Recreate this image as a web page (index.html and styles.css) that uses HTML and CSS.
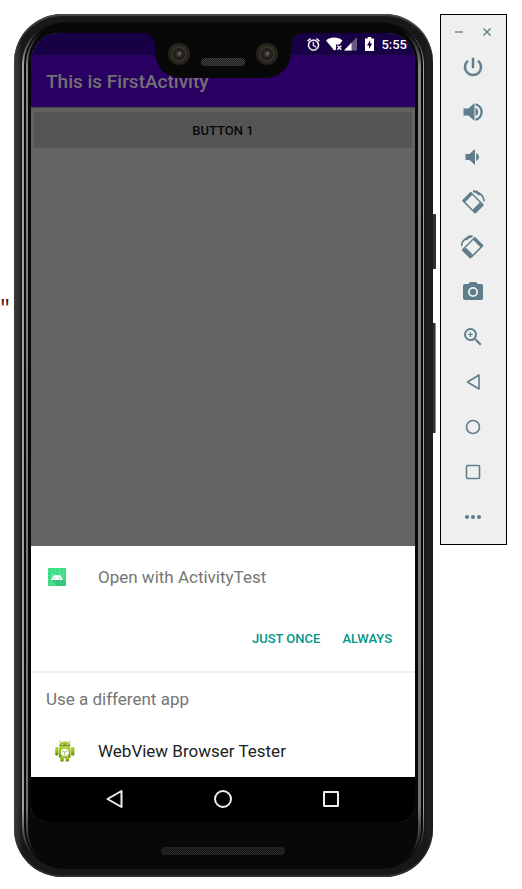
FILE: index.html
```html
<!DOCTYPE html>
<html lang="en">
<head>
<meta charset="utf-8">
<title>Android Emulator</title>
<link rel="stylesheet" href="styles.css">
</head>
<body>
<span class="code-edge">"</span>
<main class="phone">
  <i class="side-key power-key"></i>
  <i class="side-key volume-key"></i>
  <div class="rim">
    <div class="inner-rim">
      <div class="screen">
        <div class="status-bar">
          <svg class="alarm" width="15" height="15" viewBox="0 0 24 24"><path stroke="#fff" stroke-width=".5" d="M22 5.720l-4.600-3.860-1.290 1.530 4.600 3.860L22 5.720zM7.880 3.390L6.600 1.860 2 5.710l1.290 1.530 4.590-3.850zM12.500 8H11v6l4.750 2.850.75-1.230-4-2.370V8zM12 4a9 9 0 1 0 0 18 9 9 0 0 0 0-18zm0 16a7 7 0 1 1 0-14 7 7 0 0 1 0 14z"/></svg>
          <svg class="wifi" width="17" height="14" viewBox="0 0 17 14"><path d="M0 3.500C2.500 1.200 5 .5 8.200.5s5.800.7 8.300 3L13.500 7.500H10v5L8.200 13.500z"/><path d="M11.300 8.700l4 4m0-4l-4 4" fill="none" stroke="#fff" stroke-width="1.400"/></svg>
          <svg class="signal" width="13" height="14" viewBox="0 0 13 14"><path d="M13 0v13.500H0z" opacity=".35"/><path d="M7.500 5.700v7.800H0z"/></svg>
          <svg class="battery" width="9" height="14" viewBox="0 0 9 14"><path fill-rule="evenodd" d="M2.700 0h3.600v1.400H9V14H0V1.400h2.700zM5.200 3L2 8.400h2V12l3.200-5.400H5.200z"/></svg>
          <time>5:55</time>
        </div>
        <header class="app-bar"><h1>This is FirstActivity</h1></header>
        <section class="activity"><button type="button">BUTTON 1</button></section>
        <section class="sheet">
          <div class="row">
            <svg class="icon" width="38" height="20" viewBox="0 0 38 20"><rect x="2" y="1" width="18" height="18" rx="1" fill="#3ddc84"/><path d="M2 4.500h18M2 8.500h18M2 12.500h18M2 16.500h18M5.500 1v18M9.500 1v18M13.500 1v18M17.500 1v18" stroke="#70e7a6" stroke-width=".4"/><path d="M5.500 13l6 6H20v-3l-3.500-5z" fill="#2fb873" opacity=".65"/><path d="M5.300 13c.3-3 2.400-5.100 5.700-5.100s5.400 2.100 5.700 5.100z" fill="#fff"/><path d="M8 8.500L6.900 6.700M14 8.500l1.100-1.800" stroke="#fff" stroke-width=".7"/><circle cx="8.500" cy="11" r=".6" fill="#28895b"/><circle cx="13.500" cy="11" r=".6" fill="#28895b"/></svg>
            <h2>Open with ActivityTest</h2>
          </div>
          <div class="actions"><button type="button">JUST ONCE</button><button type="button">ALWAYS</button></div>
          <h2 class="other">Use a different app</h2>
          <a class="row app" href="#">
            <svg class="icon" width="38" height="24" viewBox="0 0 38 24"><defs><linearGradient id="robot" x2="0" y2="1"><stop stop-color="#b8d432"/><stop offset=".45" stop-color="#9cbf26"/><stop offset="1" stop-color="#5e850f"/></linearGradient></defs><path d="M14.500 4l-.9-2.500M23.100 4l.9-2.500" stroke="#a9c936"/><g fill="url(#robot)"><path d="M13.200 7.400c.1-3.200 2.200-5 5.600-5s5.500 1.800 5.600 5z"/><rect x="13" y="7.700" width="11.600" height="11.300" rx="1"/><rect x="9.200" y="8" width="3.300" height="8.500" rx="1"/><rect x="25.100" y="8" width="3.300" height="8.500" rx="1"/><rect x="14.300" y="17" width="3.500" height="5.500" rx="1"/><rect x="19.500" y="17" width="3.500" height="5.500" rx="1"/></g><circle cx="16.300" cy="5.300" r=".6" fill="#fff"/><circle cx="21.300" cy="5.300" r=".6" fill="#fff"/><path d="M18.800 9.500l3.800 1.600v4.600l-3.800 2-3.800-2v-4.600z" fill="#fff"/><path d="M15.700 11.800l3.100 1.300 3.200-1.300M18.800 13.100v3.900" stroke="#8eac43" stroke-width=".7" fill="none"/></svg>
            <span>WebView Browser Tester</span>
          </a>
        </section>
        <nav class="nav-bar">
          <button type="button" aria-label="Back"><svg width="20" height="20" viewBox="0 0 20 20"><path d="M16.500 2v16L2.500 10z"/></svg></button>
          <button type="button" aria-label="Home"><svg width="20" height="20" viewBox="0 0 20 20"><circle cx="10" cy="10" r="8"/></svg></button>
          <button type="button" aria-label="Overview"><svg width="20" height="20" viewBox="0 0 20 20"><rect x="3" y="3" width="14" height="14"/></svg></button>
        </nav>
        <svg class="notch" width="164" height="46" viewBox="0 0 164 46">
          <defs>
            <pattern id="mesh" width="2" height="2" patternUnits="userSpaceOnUse"><rect width="2" height="2" fill="#1c1c1c"/><path d="M0 0h1v1H0zM1 1h1v1H1z" fill="#434343"/></pattern>
            <radialGradient id="lens"><stop stop-color="#5e5855"/><stop offset=".25" stop-color="#302c2b"/><stop offset=".5" stop-color="#171615"/><stop offset=".58" stop-color="#3d3932"/><stop offset=".7" stop-color="#2b2720"/><stop offset="1" stop-color="#26221b"/></radialGradient>
          </defs>
          <path d="M0 0C9 0 14 5 14 14v3c0 17 10 28 27 28h82c17 0 27-11 27-28v-3c0-9 5-14 14-14z" fill="#080808"/>
          <circle cx="38" cy="21" r="11" fill="url(#lens)"/><circle cx="126" cy="21" r="11" fill="url(#lens)"/>
          <circle cx="39" cy="20" r=".8" fill="#a09696"/><circle cx="127" cy="20" r=".8" fill="#a09696"/>
          <rect x="60" y="25" width="44" height="8" rx="4" fill="url(#mesh)"/>
        </svg>
      </div>
      <svg class="speaker" width="124" height="8" viewBox="0 0 124 8"><defs><pattern id="grille" width="2" height="2" patternUnits="userSpaceOnUse"><rect width="2" height="2" fill="#161616"/><path d="M0 0h1v1H0zM1 1h1v1H1z" fill="#2a2a2a"/></pattern></defs><rect width="124" height="8" rx="4" fill="url(#grille)"/></svg>
    </div>
  </div>
</main>
<aside class="toolbar">
  <div class="window-controls">
    <button type="button" aria-label="Minimize"><svg width="10" height="10" viewBox="0 0 10 10"><path d="M1 5h8" stroke="#93a7b1" stroke-width="2"/></svg></button>
    <button type="button" aria-label="Close"><svg width="10" height="10" viewBox="0 0 10 10"><path d="M1.500 1.500l7 7M8.500 1.500l-7 7" stroke="#607d8b" stroke-width="1.400"/></svg></button>
  </div>
  <button type="button" aria-label="Power"><svg width="24" height="24" viewBox="0 0 24 24"><path d="M13 3h-2v10h2V3zm4.830 2.170l-1.420 1.420A6.920 6.920 0 0 1 19 12a7 7 0 1 1-11.420-5.420L6.170 5.170A8.960 8.960 0 0 0 3 12a9 9 0 1 0 14.830-6.830z" stroke="#607d8b" stroke-width=".5"/></svg></button>
  <button type="button" aria-label="Volume up"><svg width="24" height="24" viewBox="0 0 24 24"><path d="M2.500 8.500v7h5l6 5.500V3l-6 5.500zM14.500 7.800v8.400c1.700-.8 2.700-2.300 2.700-4.200s-1-3.400-2.700-4.200z"/><path d="M14.500 4.300a7.900 7.900 0 0 1 0 15.400" fill="none" stroke="#607d8b" stroke-width="2.300"/></svg></button>
  <button type="button" aria-label="Volume down"><svg width="24" height="24" viewBox="0 0 24 24"><path d="M4.500 9v6h4l5.500 5V4L8.500 9zM15.200 8v8c1.700-.8 2.800-2.200 2.800-4s-1.100-3.200-2.800-4z"/></svg></button>
  <button type="button" aria-label="Rotate left"><svg width="24" height="24" viewBox="0 0 24 24"><g id="rotate"><path fill-rule="evenodd" d="M8.800 2.500L1.600 9.700c-.6.600-.6 1.300 0 1.900l11.500 11.500c.6.600 1.300.6 1.900 0l7.200-7.200c.6-.6.600-1.300 0-1.900L10.700 2.500c-.6-.6-1.300-.6-1.900 0zM11.200 5.100l9 9-6.900 6.900-9-9z"/><path d="M11.800 19.500l6.900-6.900 2 2-6.900 6.900z"/><path d="M12 1.400c5.800 0 10.600 4 11.200 10" fill="none" stroke="#607d8b" stroke-width="1.600"/><path d="M11.500.6h4.500l4 4-2 .8z"/></g></svg></button>
  <button type="button" aria-label="Rotate right"><svg width="24" height="24" viewBox="0 0 24 24"><use href="#rotate" transform="matrix(-1 0 0 1 23.500 0)"/></svg></button>
  <button type="button" aria-label="Take screenshot"><svg width="24" height="24" viewBox="0 0 24 24"><circle cx="12" cy="12" r="3.200"/><path d="M9 2L7.170 4H4a2 2 0 0 0-2 2v12a2 2 0 0 0 2 2h16a2 2 0 0 0 2-2V6a2 2 0 0 0-2-2h-3.170L15 2H9zm3 15a5 5 0 1 1 0-10 5 5 0 0 1 0 10z"/></svg></button>
  <button type="button" aria-label="Zoom"><svg width="24" height="24" viewBox="0 0 24 24"><path d="M15.500 14h-.79l-.28-.27A6.470 6.470 0 0 0 16 9.500 6.500 6.500 0 1 0 9.500 16c1.610 0 3.090-.59 4.230-1.570l.27.28v.79l5 4.990L20.490 19l-4.990-5zm-6 0a4.500 4.500 0 1 1 0-9 4.500 4.500 0 0 1 0 9z"/><path d="M9.500 7v5M7 9.500h5" stroke="#607d8b" stroke-width="1.200"/></svg></button>
  <button type="button" aria-label="Back"><svg class="line" width="24" height="24" viewBox="0 0 24 24"><path d="M18 5v14L6.500 12z"/></svg></button>
  <button type="button" aria-label="Home"><svg class="line" width="24" height="24" viewBox="0 0 24 24"><circle cx="12" cy="12" r="6.500"/></svg></button>
  <button type="button" aria-label="Overview"><svg class="line" width="24" height="24" viewBox="0 0 24 24"><rect x="5.500" y="5.500" width="13" height="13" rx="1"/></svg></button>
  <button type="button" aria-label="More"><svg width="24" height="24" viewBox="0 0 24 24"><circle cx="6" cy="12" r="2.100"/><circle cx="12" cy="12" r="2.100"/><circle cx="18" cy="12" r="2.100"/></svg></button>
</aside>
</body>
</html>
```
FILE: styles.css
```css
* { box-sizing: border-box; }

body {
  display: flex;
  align-items: flex-start;
  min-height: 100vh;
  margin: 0;
  padding: 14px 15px 12px 0;
  background: #fff;
  font-family: Roboto, sans-serif;
}

button {
  margin: 0;
  padding: 0;
  border: 0;
  background: none;
  font: inherit;
}

svg { display: block; }
h1, h2 { margin: 0; }

.code-edge {
  flex: none;
  width: 14px;
  padding-top: 285px;
  color: #4a1a1a;
  font: 20px/20px "Liberation Mono", monospace;
  text-indent: -1px;
}

/* Device body */
.phone {
  position: relative;
  display: flex;
  flex: 1;
  align-self: stretch;
  margin-right: 7px;
  padding: 8px 9px 8px 8px;
  border-radius: 48px;
  background: linear-gradient(90deg, #3c3c3c 0, #303030 4px, #181818 8px, #181818 calc(100% - 9px), #202020 calc(100% - 3px), #161616);
  box-shadow: inset 0 2px 1px #484848, inset 0 -2px 1px #303030;
}

/* Metal edges fade out towards the top and bottom corners */
.rim, .inner-rim {
  display: flex;
  flex: 1;
  flex-direction: column;
  border: solid transparent;
}

.rim {
  padding: 0 2px;
  border-width: 1px 1px 0 2px;
  border-radius: 42px;
  background:
    linear-gradient(#080808, #080808) padding-box,
    linear-gradient(#111 8px, #a0a0a2 40px, #a0a0a2 calc(100% - 60px), #111 calc(100% - 12px)) border-box;
}

.inner-rim {
  padding: 9px 3px 14px;
  border-width: 1px 3px 0 2px;
  border-radius: 40px;
  background:
    linear-gradient(#080808, #080808) padding-box,
    linear-gradient(#080808 8px, #858585 44px, #707070 calc(100% - 60px), #080808 calc(100% - 12px)) border-box;
}

.side-key {
  position: absolute;
  left: 100%;
  width: 3px;
  border-right: 1px solid #8a8a8a;
  border-radius: 0 1px 1px 0;
  background: #303030;
}

.power-key { top: 200px; height: 55px; border-color: #333; }
.volume-key { top: 309px; height: 110px; }

.speaker { margin: 25px auto 0; }

/* Screen */
.screen {
  position: relative;
  display: flex;
  flex: 1;
  flex-direction: column;
  overflow: hidden;
  border-radius: 28px 28px 16px 16px;
  background: #646464;
}

.notch {
  position: absolute;
  top: 0;
  right: 0;
  left: 0;
  margin: 0 auto;
}

.status-bar {
  display: flex;
  align-items: center;
  justify-content: flex-end;
  height: 22px;
  padding-right: 8px;
  background: #170045;
  color: #fff;
  font-size: 13px;
  font-weight: 500;
}

.status-bar svg { fill: #fff; }
.alarm { margin-right: 5px; }
.wifi { margin-right: 1px; }
.signal { margin-right: 8px; }
.battery { margin-right: 7px; }

.app-bar {
  padding: 15px 15px 13px;
  background: #290061;
  box-shadow: 0 1px 2px #444;
}

.app-bar h1 {
  color: #747174;
  font-size: 19px;
  font-weight: 500;
  line-height: 24px;
}

.activity {
  flex: 1;
  padding: 5px 3px;
}

.activity button {
  width: 100%;
  height: 36px;
  border-radius: 2px;
  background: #555;
  box-shadow: 0 0 1px #4a4a4a;
  color: #080808;
  font-size: 13px;
  font-weight: 500;
}

/* App chooser */
.sheet {
  background: #fff;
  color: #757575;
  font-size: 17px;
}

.sheet h2 {
  font-size: inherit;
  font-weight: 400;
}

.row {
  display: flex;
  align-items: center;
  gap: 14px;
  height: 61px;
  padding: 0 15px;
}

.actions {
  display: flex;
  justify-content: flex-end;
  gap: 22px;
  padding: 21px 23px;
  border-bottom: 2px solid #eee;
  color: #009688;
  font-size: 13px;
  font-weight: 500;
  line-height: 22px;
}

.actions button { color: inherit; }

.sheet .other {
  padding: 14px 15px;
  line-height: 24px;
}

.app {
  height: 52px;
  color: #212121;
  text-decoration: none;
}

.nav-bar {
  display: flex;
  justify-content: center;
  gap: 88px;
  padding: 12px 0 13px;
  background: #000;
}

.nav-bar svg {
  fill: none;
  stroke: #eee;
  stroke-width: 2;
  stroke-linejoin: round;
}

/* Emulator controls */
.toolbar {
  display: flex;
  flex: none;
  flex-direction: column;
  width: 67px;
  padding: 0 1px 5px 0;
  border: 1px solid #000;
  background: #efefef;
}

.toolbar > button {
  display: grid;
  place-items: center;
  height: 45px;
}

.toolbar svg { fill: #607d8b; }

.toolbar .line {
  fill: none;
  stroke: #607d8b;
  stroke-width: 1.6;
  stroke-linejoin: round;
}

.window-controls {
  display: flex;
  justify-content: center;
  gap: 18px;
  padding: 12px 0 7px;
}
```
